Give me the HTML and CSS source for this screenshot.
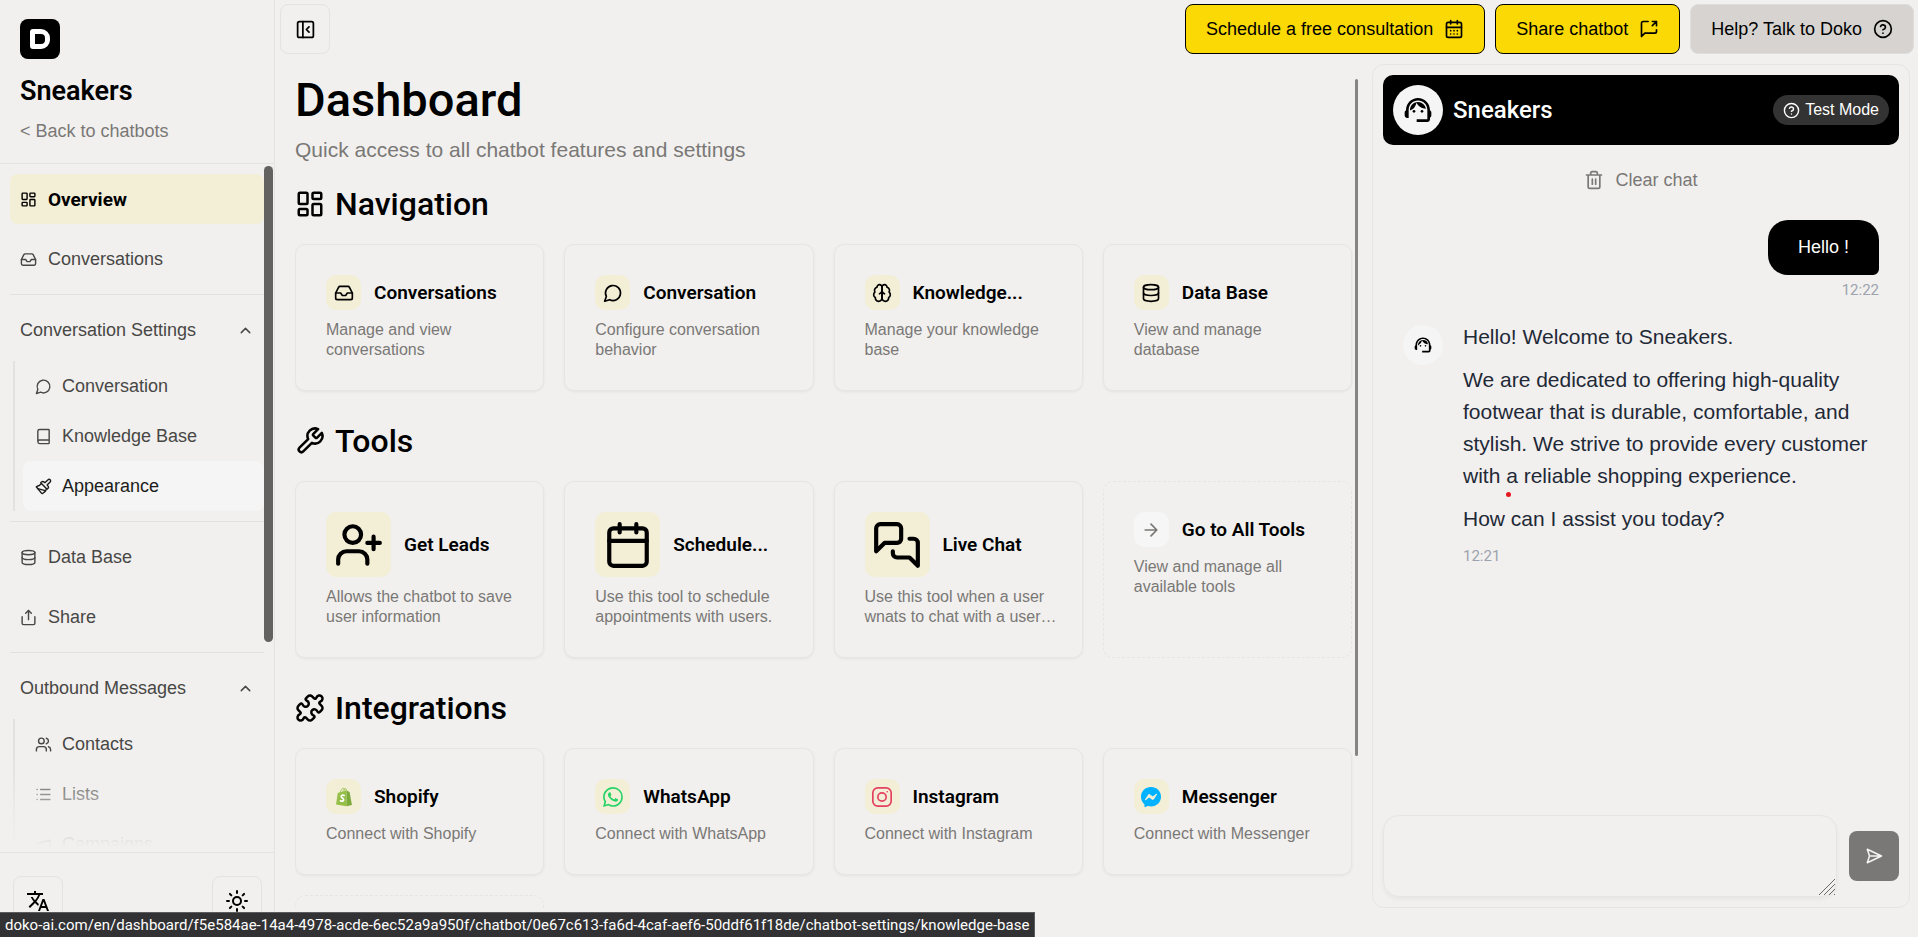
FILE: index.html
```html
<!DOCTYPE html>
<html lang="en">

<head>
    <meta charset="UTF-8">
    <meta name="viewport" content="width=device-width, initial-scale=1.0">
    <title>Sneakers - Dashboard</title>
    <link rel="stylesheet" href="styles.css">
</head>

<body>
    <!-- icon sprite -->
    <svg class="sprite" xmlns="http://www.w3.org/2000/svg">
        <symbol id="i-dashboard" viewBox="0 0 24 24"><rect x="3" y="3" width="7" height="9" rx="1"/><rect x="14" y="3" width="7" height="5" rx="1"/><rect x="14" y="12" width="7" height="9" rx="1"/><rect x="3" y="16" width="7" height="5" rx="1"/></symbol>
        <symbol id="i-inbox" viewBox="0 0 24 24"><path d="M22 12h-6l-2 3h-4l-2-3H2"/><path d="M5.45 5.11 2 12v6a2 2 0 0 0 2 2h16a2 2 0 0 0 2-2v-6l-3.45-6.89A2 2 0 0 0 16.76 4H7.24a2 2 0 0 0-1.79 1.11z"/></symbol>
        <symbol id="i-chat" viewBox="0 0 24 24"><path d="M7.9 20A9 9 0 1 0 4 16.1L2 22Z"/></symbol>
        <symbol id="i-book" viewBox="0 0 24 24"><path d="M4 19.5v-15A2.5 2.5 0 0 1 6.5 2H19a1 1 0 0 1 1 1v18a1 1 0 0 1-1 1H6.5a1 1 0 0 1 0-5H20"/></symbol>
        <symbol id="i-brush" viewBox="0 0 24 24"><path d="m14.6 17.9-10.7-2.9"/><path d="M18.4 2.6a2.1 2.1 0 0 1 3 3l-4 4a.5.5 0 0 0 0 .7l.9.9a2.4 2.4 0 0 1 0 3.4l-.9.9a.5.5 0 0 1-.7 0L8.4 7.2a.5.5 0 0 1 0-.7l.9-.9a2.4 2.4 0 0 1 3.4 0l.9.9a.5.5 0 0 0 .7 0z"/><path d="M9 8c-1.8 2.7-4 3.5-6.6 3.9a.5.5 0 0 0-.3.9l7.3 8.9a1 1 0 0 0 1.2.2C12.7 20.4 16 16.8 16 15"/></symbol>
        <symbol id="i-database" viewBox="0 0 24 24"><ellipse cx="12" cy="5" rx="9" ry="3"/><path d="M3 5v14a9 3 0 0 0 18 0V5"/><path d="M3 12a9 3 0 0 0 18 0"/></symbol>
        <symbol id="i-share" viewBox="0 0 24 24"><path d="M12 2v13"/><path d="m16 6-4-4-4 4"/><path d="M3 11v9a2 2 0 0 0 2 2h14a2 2 0 0 0 2-2v-9"/></symbol>
        <symbol id="i-users" viewBox="0 0 24 24"><path d="M16 21v-2a4 4 0 0 0-4-4H6a4 4 0 0 0-4 4v2"/><circle cx="9" cy="7" r="4"/><path d="M22 21v-2a4 4 0 0 0-3-3.87M16 3.13a4 4 0 0 1 0 7.75"/></symbol>
        <symbol id="i-list" viewBox="0 0 24 24"><path d="M8 5h13M8 12h13M8 19h13M3 5h.01M3 12h.01M3 19h.01"/></symbol>
        <symbol id="i-megaphone" viewBox="0 0 24 24"><path d="m3 11 18-5v12L3 14v-3z"/><path d="M11.6 16.8a3 3 0 1 1-5.8-1.6"/></symbol>
        <symbol id="i-up" viewBox="0 0 24 24"><path d="m18 15-6-6-6 6"/></symbol>
        <symbol id="i-translate" viewBox="0 0 24 24"><path d="m12.87 15.07-2.54-2.51.03-.03A17.52 17.52 0 0 0 14.07 6H17V4h-7V2H8v2H1v1.99h11.17C11.5 7.92 10.44 9.75 9 11.35 8.07 10.32 7.3 9.19 6.69 8h-2c.73 1.63 1.73 3.17 2.98 4.56l-5.09 5.02L4 19l5-5 3.11 3.11zM18.5 10h-2L12 22h2l1.12-3h4.75L21 22h2zm-2.62 7 1.62-4.33L19.12 17z"/></symbol>
        <symbol id="i-sun" viewBox="0 0 24 24"><circle cx="12" cy="12" r="4"/><path d="M12 2v2M12 20v2M4.93 4.93l1.41 1.41M17.66 17.66l1.41 1.41M2 12h2M20 12h2M6.34 17.66l-1.41 1.41M19.07 4.93l-1.41 1.41"/></symbol>
        <symbol id="i-panel" viewBox="0 0 24 24"><rect x="3" y="3" width="18" height="18" rx="2"/><path d="M9 3v18M16 15l-3-3 3-3"/></symbol>
        <symbol id="i-calendar-days" viewBox="0 0 24 24"><rect x="3" y="4" width="18" height="18" rx="2"/><path d="M8 2v4M16 2v4M3 10h18M8 14h.01M12 14h.01M16 14h.01M8 18h.01M12 18h.01M16 18h.01"/></symbol>
        <symbol id="i-chat-share" viewBox="0 0 24 24"><path d="M21 13v2a2 2 0 0 1-2 2H7l-4 4V5a2 2 0 0 1 2-2h6"/><path d="M16 3h5v5M16 8l5-5"/></symbol>
        <symbol id="i-help" viewBox="0 0 24 24"><circle cx="12" cy="12" r="10"/><path d="M9.09 9a3 3 0 0 1 5.83 1c0 2-3 3-3 3M12 17h.01"/></symbol>
        <symbol id="i-brain" viewBox="0 0 24 24"><path d="M12 5a3 3 0 1 0-5.997.125 4 4 0 0 0-2.526 5.77 4 4 0 0 0 .556 6.588A4 4 0 1 0 12 18Z"/><path d="M12 5a3 3 0 1 1 5.997.125 4 4 0 0 1 2.526 5.77 4 4 0 0 1-.556 6.588A4 4 0 1 1 12 18Z"/><path d="M15 13a4.5 4.5 0 0 1-3-4 4.5 4.5 0 0 1-3 4"/></symbol>
        <symbol id="i-wrench" viewBox="0 0 24 24"><path d="M14.7 6.3a1 1 0 0 0 0 1.4l1.6 1.6a1 1 0 0 0 1.4 0l3.77-3.77a6 6 0 0 1-7.94 7.94l-6.91 6.91a2.12 2.12 0 0 1-3-3l6.91-6.91a6 6 0 0 1 7.94-7.94l-3.76 3.76z"/></symbol>
        <symbol id="i-puzzle" viewBox="0 0 24 24"><path d="M19.439 7.85c-.049.322.059.648.289.878l1.568 1.568c.47.47.706 1.087.706 1.704s-.235 1.233-.706 1.704l-1.611 1.611a.98.98 0 0 1-.837.276c-.47-.07-.802-.48-.968-.925a2.501 2.501 0 1 0-3.214 3.214c.446.166.855.497.925.968a.979.979 0 0 1-.276.837l-1.61 1.61a2.404 2.404 0 0 1-1.705.707 2.402 2.402 0 0 1-1.704-.706l-1.568-1.568a1.026 1.026 0 0 0-.877-.29c-.493.074-.84.504-1.02.968a2.5 2.5 0 1 1-3.237-3.237c.464-.18.894-.527.967-1.02a1.026 1.026 0 0 0-.289-.877l-1.568-1.568A2.402 2.402 0 0 1 1.998 12c0-.617.236-1.234.706-1.704L4.23 8.77c.24-.24.581-.353.917-.303.515.077.877.528 1.073 1.01a2.5 2.5 0 1 0 3.259-3.259c-.482-.196-.933-.558-1.01-1.073-.05-.336.062-.676.303-.917l1.525-1.525A2.402 2.402 0 0 1 12 1.998c.617 0 1.234.236 1.704.706l1.568 1.568c.23.23.556.338.877.29.493-.074.84-.504 1.02-.968a2.5 2.5 0 1 1 3.237 3.237c-.464.18-.894.527-.967 1.02Z"/></symbol>
        <symbol id="i-user-plus" viewBox="0 0 24 24"><path d="M16 21v-2a4 4 0 0 0-4-4H6a4 4 0 0 0-4 4v2"/><circle cx="9" cy="7" r="4"/><path d="M19 8v6M22 11h-6"/></symbol>
        <symbol id="i-calendar" viewBox="0 0 24 24"><rect x="3" y="4" width="18" height="18" rx="2"/><path d="M8 2v4M16 2v4M3 10h18"/></symbol>
        <symbol id="i-chats" viewBox="0 0 24 24"><path d="M14 9a2 2 0 0 1-2 2H6l-4 4V4a2 2 0 0 1 2-2h8a2 2 0 0 1 2 2z"/><path d="M18 9h2a2 2 0 0 1 2 2v11l-4-4h-6a2 2 0 0 1-2-2v-1"/></symbol>
        <symbol id="i-arrow" viewBox="0 0 24 24"><path d="M5 12h14M12 5l7 7-7 7"/></symbol>
        <symbol id="i-trash" viewBox="0 0 24 24"><path d="M3 6h18M19 6v14a2 2 0 0 1-2 2H7a2 2 0 0 1-2-2V6M8 6V4a2 2 0 0 1 2-2h4a2 2 0 0 1 2 2v2M10 11v6M14 11v6"/></symbol>
        <symbol id="i-send" viewBox="0 0 24 24"><path d="m3 3 3 9-3 9 19-9zM6 12h16"/></symbol>
        <symbol id="i-agent" viewBox="0 0 24 24"><path d="M21 12.22C21 6.73 16.74 3 12 3c-4.69 0-9 3.65-9 9.28-.6.34-1 .98-1 1.72v2c0 1.1.9 2 2 2h1v-6.1c0-3.87 3.13-7 7-7s7 3.13 7 7V19h-8v2h8c1.1 0 2-.9 2-2v-1.22c.59-.31 1-.92 1-1.64v-2.3c0-.7-.41-1.31-1-1.62z"/><circle cx="9" cy="13" r="1"/><circle cx="15" cy="13" r="1"/><path d="M18 11.03A6.04 6.04 0 0 0 12.05 6c-3.03 0-6.29 2.51-6.03 6.45a8.075 8.075 0 0 0 4.86-5.89c1.31 2.63 4 4.44 7.12 4.47z"/></symbol>
        <symbol id="i-whatsapp" viewBox="0 0 16 16"><path d="M13.601 2.326A7.85 7.85 0 0 0 7.994 0C3.627 0 .068 3.558.064 7.926c0 1.399.366 2.76 1.057 3.965L0 16l4.204-1.102a7.9 7.9 0 0 0 3.79.965h.004c4.368 0 7.926-3.558 7.93-7.93A7.9 7.9 0 0 0 13.6 2.326zM7.994 14.521a6.6 6.6 0 0 1-3.356-.92l-.24-.144-2.494.654.666-2.433-.156-.251a6.56 6.56 0 0 1-1.007-3.505c0-3.626 2.957-6.584 6.591-6.584a6.56 6.56 0 0 1 4.66 1.931 6.56 6.56 0 0 1 1.928 4.66c-.004 3.639-2.961 6.592-6.592 6.592m3.615-4.934c-.197-.099-1.17-.578-1.353-.646-.182-.065-.315-.099-.445.099-.133.197-.513.646-.627.775-.114.133-.232.148-.43.05-.197-.1-.836-.308-1.592-.985-.59-.525-.985-1.175-1.103-1.372-.114-.198-.011-.304.088-.403.087-.088.197-.232.296-.346.1-.114.133-.198.198-.33.065-.134.034-.248-.015-.347-.05-.099-.445-1.076-.612-1.47-.16-.389-.323-.335-.445-.34-.114-.007-.247-.007-.38-.007a.73.73 0 0 0-.529.247c-.182.198-.691.677-.691 1.654s.71 1.916.81 2.049c.098.133 1.394 2.132 3.383 2.992.47.205.84.326 1.129.418.475.152.904.129 1.246.08.38-.058 1.171-.48 1.338-.943.164-.464.164-.86.114-.943-.049-.084-.182-.133-.38-.232"/></symbol>
        <symbol id="i-instagram" viewBox="0 0 24 24"><rect x="1" y="1" width="22" height="22" rx="6"/><circle cx="12" cy="12" r="5"/><path d="M18.3 5.7h.01"/></symbol>
        <symbol id="i-messenger" viewBox="0 0 16 16"><path d="M0 7.76C0 3.301 3.493 0 8 0s8 3.301 8 7.76-3.493 7.76-8 7.76c-.81 0-1.586-.107-2.316-.307a.64.64 0 0 0-.427.03l-1.588.702a.64.64 0 0 1-.898-.566l-.044-1.423a.64.64 0 0 0-.215-.456C.956 12.108 0 10.092 0 7.76m5.546-1.459-2.35 3.728c-.225.358.214.761.551.506l2.525-1.916a.48.48 0 0 1 .578-.002l1.869 1.402a1.2 1.2 0 0 0 1.735-.32l2.35-3.728c.226-.358-.214-.761-.551-.506L9.728 7.381a.48.48 0 0 1-.578.002L7.281 5.98a1.2 1.2 0 0 0-1.735.32z"/></symbol>
        <symbol id="i-shopify" viewBox="0 0 24 24">
            <path class="bag" d="M4.5 7.2 15 4.3v18.9L2.5 20.9z"/>
            <path class="bag-side" d="m15 4.3 3.7 1.6 2.8 15.7L15 23.2z"/>
            <path class="bag-handle" d="M7.5 7c.5-3.5 2-5.5 3.7-5.5 1.5 0 2 1.5 2 4M10.5 5.5C11 3 12.5 1.8 13.7 2c1 .2 1.5 1.2 1.7 2.5"/>
            <path class="bag-mark" d="M12.3 10.2c-1.6-.8-3.7-.3-3.7 1.3 0 1.7 3 1.9 3 3.9 0 1.7-2 2.1-3.8 1"/>
        </symbol>
    </svg>

    <div class="app">
        <aside class="sidebar">
            <div class="sidebar-head">
                <a class="logo" href="#" aria-label="Home"><span class="logo-mark"></span></a>
                <h2 class="bot-name">Sneakers</h2>
                <a class="back-link" href="#">&lt; Back to chatbots</a>
            </div>

            <nav class="nav">
                <a class="nav-item active" href="#"><svg class="icon"><use href="#i-dashboard"/></svg>Overview</a>
                <a class="nav-item" href="#"><svg class="icon"><use href="#i-inbox"/></svg>Conversations</a>
                <hr class="divider">
                <button class="nav-group" type="button">Conversation Settings<svg class="icon"><use href="#i-up"/></svg></button>
                <div class="subnav">
                    <a class="nav-item" href="#"><svg class="icon"><use href="#i-chat"/></svg>Conversation</a>
                    <a class="nav-item" href="#"><svg class="icon"><use href="#i-book"/></svg>Knowledge Base</a>
                    <a class="nav-item hovered" href="#"><svg class="icon"><use href="#i-brush"/></svg>Appearance</a>
                </div>
                <hr class="divider">
                <a class="nav-item" href="#"><svg class="icon"><use href="#i-database"/></svg>Data Base</a>
                <a class="nav-item" href="#"><svg class="icon"><use href="#i-share"/></svg>Share</a>
                <hr class="divider">
                <button class="nav-group" type="button">Outbound Messages<svg class="icon"><use href="#i-up"/></svg></button>
                <div class="subnav">
                    <a class="nav-item" href="#"><svg class="icon"><use href="#i-users"/></svg>Contacts</a>
                    <a class="nav-item" href="#"><svg class="icon"><use href="#i-list"/></svg>Lists</a>
                    <a class="nav-item" href="#"><svg class="icon"><use href="#i-megaphone"/></svg>Campaigns</a>
                </div>
                <div class="nav-fade"></div>
                <div class="nav-scroll"></div>
            </nav>

            <div class="sidebar-foot">
                <button class="square-btn" type="button" aria-label="Language"><svg class="icon solid"><use href="#i-translate"/></svg></button>
                <button class="square-btn" type="button" aria-label="Theme"><svg class="icon"><use href="#i-sun"/></svg></button>
            </div>
        </aside>

        <div class="page">
            <header class="topbar">
                <button class="square-btn toggle" type="button" aria-label="Collapse sidebar"><svg class="icon"><use href="#i-panel"/></svg></button>
                <button class="btn yellow" type="button">Schedule a free consultation<svg class="icon"><use href="#i-calendar-days"/></svg></button>
                <button class="btn yellow" type="button">Share chatbot<svg class="icon"><use href="#i-chat-share"/></svg></button>
                <button class="btn gray" type="button">Help? Talk to Doko<svg class="icon"><use href="#i-help"/></svg></button>
            </header>

            <div class="columns">
                <main class="main">
                    <h1>Dashboard</h1>
                    <p class="subtitle">Quick access to all chatbot features and settings</p>

                    <h2 class="section-title"><svg class="icon"><use href="#i-dashboard"/></svg>Navigation</h2>
                    <div class="cards">
                        <a class="card" href="#">
                            <div class="card-head"><span class="tile"><svg class="icon"><use href="#i-inbox"/></svg></span><h3>Conversations</h3></div>
                            <p>Manage and view conversations</p>
                        </a>
                        <a class="card" href="#">
                            <div class="card-head"><span class="tile"><svg class="icon"><use href="#i-chat"/></svg></span><h3>Conversation</h3></div>
                            <p>Configure conversation behavior</p>
                        </a>
                        <a class="card" href="#">
                            <div class="card-head"><span class="tile"><svg class="icon"><use href="#i-brain"/></svg></span><h3>Knowledge...</h3></div>
                            <p>Manage your knowledge base</p>
                        </a>
                        <a class="card" href="#">
                            <div class="card-head"><span class="tile"><svg class="icon"><use href="#i-database"/></svg></span><h3>Data Base</h3></div>
                            <p>View and manage database</p>
                        </a>
                    </div>

                    <h2 class="section-title"><svg class="icon"><use href="#i-wrench"/></svg>Tools</h2>
                    <div class="cards">
                        <a class="card" href="#">
                            <div class="card-head"><span class="tile big"><svg class="icon"><use href="#i-user-plus"/></svg></span><h3>Get Leads</h3></div>
                            <p>Allows the chatbot to save user information</p>
                        </a>
                        <a class="card" href="#">
                            <div class="card-head"><span class="tile big"><svg class="icon"><use href="#i-calendar"/></svg></span><h3>Schedule...</h3></div>
                            <p>Use this tool to schedule appointments with users.</p>
                        </a>
                        <a class="card" href="#">
                            <div class="card-head"><span class="tile big"><svg class="icon"><use href="#i-chats"/></svg></span><h3>Live Chat</h3></div>
                            <p>Use this tool when a user wnats to chat with a user…</p>
                        </a>
                        <a class="card dashed" href="#">
                            <div class="card-head"><span class="tile plain"><svg class="icon"><use href="#i-arrow"/></svg></span><h3>Go to All Tools</h3></div>
                            <p>View and manage all available tools</p>
                        </a>
                    </div>

                    <h2 class="section-title"><svg class="icon"><use href="#i-puzzle"/></svg>Integrations</h2>
                    <div class="cards">
                        <a class="card" href="#">
                            <div class="card-head"><span class="tile"><svg class="icon brand shopify"><use href="#i-shopify"/></svg></span><h3>Shopify</h3></div>
                            <p>Connect with Shopify</p>
                        </a>
                        <a class="card" href="#">
                            <div class="card-head"><span class="tile"><svg class="icon brand whatsapp"><use href="#i-whatsapp"/></svg></span><h3>WhatsApp</h3></div>
                            <p>Connect with WhatsApp</p>
                        </a>
                        <a class="card" href="#">
                            <div class="card-head"><span class="tile"><svg class="icon instagram"><use href="#i-instagram"/></svg></span><h3>Instagram</h3></div>
                            <p>Connect with Instagram</p>
                        </a>
                        <a class="card" href="#">
                            <div class="card-head"><span class="tile"><svg class="icon brand messenger"><use href="#i-messenger"/></svg></span><h3>Messenger</h3></div>
                            <p>Connect with Messenger</p>
                        </a>
                        <div class="card dashed"></div>
                    </div>
                    <div class="main-scroll"></div>
                </main>

                <section class="chat">
                    <header class="chat-head">
                        <span class="avatar"><svg class="icon solid"><use href="#i-agent"/></svg></span>
                        <h2>Sneakers</h2>
                        <span class="pill"><svg class="icon"><use href="#i-help"/></svg>Test Mode</span>
                    </header>
                    <button class="clear" type="button"><svg class="icon"><use href="#i-trash"/></svg>Clear chat</button>

                    <div class="messages">
                        <div class="msg-user">
                            <p class="bubble">Hello !</p>
                            <time>12:22</time>
                        </div>
                        <div class="msg-bot">
                            <span class="avatar small"><svg class="icon solid"><use href="#i-agent"/></svg></span>
                            <div class="msg-text">
                                <p>Hello! Welcome to Sneakers.</p>
                                <p>We are dedicated to offering high-quality footwear that is durable, comfortable, and stylish. We strive to provide every customer with a reliable shopping experience.</p>
                                <p>How can I assist you today?</p>
                                <time>12:21</time>
                                <span class="red-dot"></span>
                            </div>
                        </div>
                    </div>

                    <form class="composer">
                        <div class="field">
                            <textarea aria-label="Message"></textarea>
                            <svg class="grip" viewBox="0 0 18 18"><path d="M1 17 17 1M6 17 17 6M11 17l6-6M16 17l1-1"/></svg>
                        </div>
                        <button class="send" type="button" aria-label="Send"><svg class="icon"><use href="#i-send"/></svg></button>
                    </form>
                </section>
            </div>
        </div>
    </div>

    <div class="status">doko-ai.com/en/dashboard/f5e584ae-14a4-4978-acde-6ec52a9a950f/chatbot/0e67c613-fa6d-4caf-aef6-50ddf61f18de/chatbot-settings/knowledge-base</div>
</body>

</html>
```
FILE: styles.css
```css
* {
    margin: 0;
    padding: 0;
    box-sizing: border-box;
}

body {
    height: 100vh;
    overflow: hidden;
    background: #f1f0ee;
    color: #000;
    font-family: "Liberation Sans", Arial, sans-serif;
    font-size: 18px;
}

a {
    color: inherit;
    text-decoration: none;
}

button {
    border: none;
    background: none;
    font: inherit;
    color: inherit;
}

h1,
h2,
h3 {
    font-family: Roboto, sans-serif;
    font-weight: 600;
}

.sprite {
    display: none;
}

.icon {
    flex: none;
    width: 18px;
    height: 18px;
    fill: none;
    stroke: currentColor;
    stroke-width: 2;
    stroke-linecap: round;
    stroke-linejoin: round;
}

.icon.solid,
.icon.brand {
    fill: currentColor;
    stroke: none;
}

.app {
    display: flex;
    height: 100vh;
}

/* sidebar */
.sidebar {
    display: flex;
    flex-direction: column;
    flex: none;
    width: 275px;
    border-right: 1px solid #e4e3e1;
}

.sidebar-head {
    display: flex;
    flex-direction: column;
    align-items: flex-start;
    height: 164px;
    padding: 19px 20px 0;
    border-bottom: 1px solid #e4e3e1;
}

.logo {
    display: flex;
    align-items: center;
    justify-content: center;
    width: 40px;
    height: 40px;
    border-radius: 8px;
    background: #000;
}

.logo-mark {
    width: 20px;
    height: 20px;
    border: 5px solid #fff;
    border-radius: 3px 9px 9px 3px;
}

.bot-name {
    margin-top: 17px;
    font-size: 27px;
    line-height: 30px;
}

.back-link {
    margin-top: 14px;
    line-height: 22px;
    color: #7a7876;
}

.nav {
    position: relative;
    flex: 1;
    min-height: 0;
    padding: 10px 10px 0;
    overflow: hidden;
    color: #484745;
}

.nav-item {
    display: flex;
    align-items: center;
    gap: 11px;
    height: 50px;
    padding: 0 10px;
    border-radius: 8px;
}

.nav > .nav-item + .nav-item {
    margin-top: 10px;
}

.nav-item .icon {
    width: 17px;
    height: 17px;
}

.nav-item.active {
    background: #f3eed6;
    color: #000;
    font-family: Roboto, sans-serif;
    font-size: 19px;
    font-weight: 700;
}

.nav-item.hovered {
    background: #f5f5f5;
    color: #1c1c1b;
}

.divider {
    height: 1px;
    margin: 10px 0;
    border: none;
    background: #e2e1df;
}

.nav-group {
    display: flex;
    align-items: center;
    justify-content: space-between;
    width: 100%;
    height: 51px;
    padding: 0 10px;
}

.nav-group .icon {
    width: 17px;
    height: 17px;
}

.subnav {
    margin: 5px 0 0 3px;
    padding-left: 8px;
    border-left: 2px solid #e2e1df;
}

.subnav .nav-item {
    padding-left: 12px;
    gap: 10px;
}

.nav-fade {
    position: absolute;
    left: 0;
    right: 0;
    bottom: 0;
    height: 100px;
    background: linear-gradient(to top, #f1f0ee 5%, rgba(241, 240, 238, 0));
}

.nav-scroll {
    position: absolute;
    top: 2px;
    right: 1px;
    width: 9px;
    height: 476px;
    border-radius: 5px;
    background: #636260;
}

.sidebar-foot {
    display: flex;
    justify-content: space-between;
    height: 85px;
    padding: 23px 12px 0 13px;
    border-top: 1px solid #e4e3e1;
}

.square-btn {
    display: flex;
    align-items: center;
    justify-content: center;
    width: 50px;
    height: 50px;
    border: 1px solid #e4e3e1;
    border-radius: 8px;
}

.sidebar-foot .icon {
    width: 24px;
    height: 24px;
}

/* top bar */
.page {
    display: flex;
    flex-direction: column;
    flex: 1;
    min-width: 0;
}

.topbar {
    display: flex;
    gap: 10px;
    padding: 4px 4px 10px 5px;
}

.toggle {
    margin-right: auto;
}

.toggle .icon {
    width: 21px;
    height: 21px;
}

.btn {
    display: flex;
    align-items: center;
    gap: 11px;
    height: 50px;
    padding: 0 20px;
    border: 1px solid #000;
    border-radius: 8px;
}

.btn .icon {
    width: 20px;
    height: 20px;
}

.yellow {
    background: #fad905;
}

.gray {
    border-color: #e0dedc;
    background: #d6d3d0;
}

/* main column */
.columns {
    display: flex;
    flex: 1;
    min-height: 0;
    padding: 0 8px 29px 20px;
}

.main {
    position: relative;
    flex: 1;
    min-width: 0;
    padding: 11px 20px 0 0;
    overflow: hidden;
}

h1 {
    font-size: 47px;
    font-weight: 500;
    line-height: 50px;
}

.subtitle {
    margin: 13px 0 24px;
    font-size: 21px;
    line-height: 24px;
    color: #7a7876;
}

.section-title {
    display: flex;
    align-items: center;
    gap: 10px;
    font-size: 32px;
    font-weight: 500;
    line-height: 36px;
}

.section-title .icon {
    width: 30px;
    height: 30px;
}

.cards {
    display: grid;
    grid-template-columns: repeat(4, 1fr);
    gap: 20px;
    margin: 22px 0 32px;
}

.card {
    min-width: 0;
    min-height: 127px;
    padding: 30px 20px 30px 30px;
    border: 1px solid #e6e5e3;
    border-radius: 10px;
    box-shadow: 0 1px 3px rgba(0, 0, 0, 0.06);
}

.card.dashed {
    border-style: dashed;
    box-shadow: none;
}

.card-head {
    display: flex;
    align-items: center;
    gap: 13px;
    margin-bottom: 10px;
}

.card h3 {
    font-size: 19px;
    line-height: 24px;
    white-space: nowrap;
}

.card p {
    font-size: 16px;
    line-height: 20px;
    color: #7a7876;
}

.tile {
    display: flex;
    align-items: center;
    justify-content: center;
    flex: none;
    width: 35px;
    height: 35px;
    border-radius: 10px;
    background: #f3eed6;
}

.tile .icon {
    width: 20px;
    height: 20px;
}

.tile.big {
    width: 65px;
    height: 65px;
}

.tile.big .icon {
    width: 50px;
    height: 50px;
}

.tile.plain {
    background: #f6f6f6;
    color: #7a7876;
}

.whatsapp {
    color: #25d366;
}

.instagram {
    color: #e4405f;
}

.messenger {
    color: #00b2ff;
}

.bag {
    fill: #95bf47;
}

.bag-side {
    fill: #7cab3b;
}

.bag-handle {
    fill: none;
    stroke: #95bf47;
    stroke-width: 1;
}

.bag-mark {
    fill: none;
    stroke: #fff;
    stroke-width: 2;
}

.main-scroll {
    position: absolute;
    top: 15px;
    right: 14px;
    width: 3px;
    height: 677px;
    border-radius: 2px;
    background: #858583;
}

/* chat preview */
.chat {
    display: flex;
    flex-direction: column;
    flex: none;
    width: 538px;
    padding: 10px;
    border: 1px solid #e6e5e3;
    border-radius: 12px;
}

.chat-head {
    display: flex;
    align-items: center;
    gap: 10px;
    height: 70px;
    padding: 0 10px;
    border-radius: 10px;
    background: #000;
    color: #fff;
}

.chat-head h2 {
    flex: 1;
    font-size: 24px;
    font-weight: 500;
}

.avatar {
    display: flex;
    align-items: center;
    justify-content: center;
    flex: none;
    width: 50px;
    height: 50px;
    border-radius: 50%;
    background: #f5f5f5;
    color: #000;
}

.avatar .icon {
    width: 32px;
    height: 32px;
}

.avatar.small {
    width: 40px;
    height: 40px;
}

.avatar.small .icon {
    width: 20px;
    height: 20px;
}

.pill {
    display: flex;
    align-items: center;
    gap: 5px;
    height: 30px;
    padding: 0 10px;
    border-radius: 15px;
    background: #333;
    font-size: 16px;
}

.pill .icon {
    width: 17px;
    height: 17px;
}

.clear {
    display: flex;
    align-items: center;
    align-self: center;
    gap: 11px;
    height: 50px;
    margin-top: 10px;
    color: #7a7876;
}

.clear .icon {
    width: 20px;
    height: 20px;
}

.messages {
    flex: 1;
    padding: 15px 20px 0;
}

.messages time {
    font-family: Roboto, sans-serif;
    font-size: 15px;
    line-height: 20px;
    color: #9ca3af;
}

.msg-user {
    display: flex;
    flex-direction: column;
    align-items: flex-end;
    gap: 5px;
}

.bubble {
    padding: 0 30px;
    border-radius: 20px 20px 6px 20px;
    background: #000;
    color: #fff;
    line-height: 55px;
}

.msg-bot {
    display: flex;
    gap: 20px;
    margin-top: 21px;
}

.msg-bot .avatar {
    margin-top: 4px;
}

.msg-text {
    position: relative;
    font-size: 21px;
    line-height: 32px;
    color: #1f2937;
}

.msg-text p {
    margin-bottom: 11px;
}

.msg-text time {
    display: block;
}

.red-dot {
    position: absolute;
    left: 43px;
    top: 171px;
    width: 5px;
    height: 5px;
    border-radius: 50%;
    background: #e5161d;
}

.composer {
    display: flex;
    align-items: center;
    gap: 12px;
}

.field {
    position: relative;
    flex: 1;
}

.field textarea {
    display: block;
    width: 100%;
    height: 82px;
    padding: 12px;
    border: 1px solid #e6e5e3;
    border-radius: 16px;
    background: none;
    box-shadow: 0 2px 4px rgba(0, 0, 0, 0.05);
    font: inherit;
    resize: none;
}

.grip {
    position: absolute;
    right: 1px;
    bottom: 1px;
    width: 18px;
    height: 18px;
    stroke: #6b6a68;
    stroke-width: 1;
}

.send {
    display: flex;
    align-items: center;
    justify-content: center;
    width: 50px;
    height: 50px;
    border-radius: 8px;
    background: #7a7876;
    color: #f5f5f5;
}

/* link preview in the window corner */
.status {
    position: fixed;
    left: 0;
    bottom: 0;
    padding: 0 5px;
    border-top: 1px solid #5c5c5e;
    border-right: 1px solid #5c5c5e;
    background: #323234;
    color: #fff;
    font-family: Roboto, sans-serif;
    font-size: 15px;
    line-height: 24px;
    white-space: nowrap;
}
```
